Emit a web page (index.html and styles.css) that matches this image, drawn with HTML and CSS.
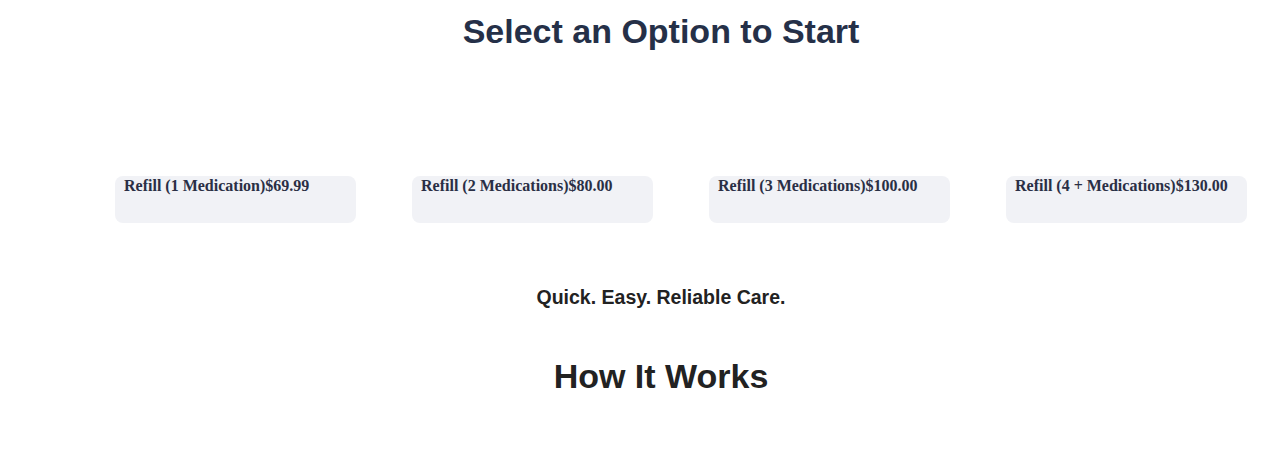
FILE: index.html
```html
<!DOCTYPE html>
<html>
<head>
<meta charset="utf-8">
<link rel="stylesheet" href="styles.css">
</head>
<body>
<main class="page">
  <h1 class="title">Select an Option to Start</h1>
  <section class="options">
    <div class="card"><strong>Refill (1 Medication)$69.99</strong></div>
    <div class="card"><strong>Refill (2 Medications)$80.00</strong></div>
    <div class="card"><strong>Refill (3 Medications)$100.00</strong></div>
    <div class="card"><strong>Refill (4 + Medications)$130.00</strong></div>
  </section>
  <p class="tagline">Quick. Easy. Reliable Care.</p>
  <h2 class="how">How It Works</h2>
</main>
</body>
</html>
```

FILE: styles.css
```css
html, body {
  margin: 0;
  padding: 0;
  background: #ffffff;
}
.page {
  margin-left: 50px;
  font-family: "Liberation Sans", Arial, sans-serif;
}
.title {
  margin: 0;
  padding-top: 11px;
  text-align: center;
  font-size: 34px;
  line-height: 40px;
  font-weight: 700;
  color: #253048;
}
.options {
  display: flex;
  gap: 56px;
  padding-left: 65px;
  margin-top: 125px;
}
.card {
  width: 241px;
  height: 47px;
  box-sizing: border-box;
  padding: 1px 9px 0;
  background: #f1f2f6;
  border-radius: 8px;
  font-family: "Liberation Serif", "Times New Roman", serif;
  font-size: 16px;
  line-height: 18px;
  color: #2a2f45;
}
.tagline {
  margin: 62px 0 0;
  text-align: center;
  font-size: 19.5px;
  line-height: 24px;
  font-weight: 700;
  color: #222222;
}
.how {
  margin: 46px 0 0;
  text-align: center;
  font-size: 34px;
  line-height: 42px;
  font-weight: 700;
  color: #222222;
}
```
